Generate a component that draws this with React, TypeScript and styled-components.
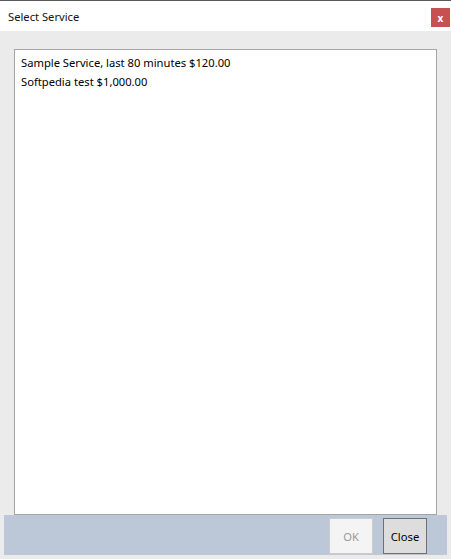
import React from "react";
import styled, { createGlobalStyle } from "styled-components";

const GlobalStyle = createGlobalStyle`
  html, body {
    margin: 0;
    padding: 0;
    background: #ebebeb;
  }
  body {
    font-family: "Noto Sans", "Open Sans", sans-serif;
  }
`;

const Window = styled.div`
  width: 451px;
  height: 559px;
  display: flex;
  flex-direction: column;
  background: #ebebeb;
  border-top: 1px solid #5a5a5a;
  box-sizing: border-box;
`;

const TitleBar = styled.div`
  height: 30px;
  background: #ffffff;
  display: flex;
  align-items: center;
  justify-content: space-between;
  padding: 0 1px 0 8px;
  flex-shrink: 0;
`;

const Title = styled.div`
  font-size: 11.2px;
  color: #111;
`;

const CloseX = styled.div`
  width: 19px;
  height: 19px;
  background: #c75050;
  color: #fff;
  font-size: 10px;
  font-weight: bold;
  display: flex;
  align-items: center;
  justify-content: center;
  margin-top: 3px;
`;

const Body = styled.div`
  flex: 1;
  display: flex;
  flex-direction: column;
  padding: 18px 14px 0 14px;
`;

const ListBox = styled.div`
  flex: 1;
  background: #fff;
  border: 1px solid #a5a5a5;
  padding: 3px 6px;
  display: flex;
  flex-direction: column;
`;

const Item = styled.div`
  font-size: 11.2px;
  color: #000;
  height: 19px;
  line-height: 19px;
`;

const Footer = styled.div`
  height: 40px;
  margin: 0 4px 4px 4px;
  background: #bcc8d8;
  display: flex;
  align-items: center;
  justify-content: flex-end;
  gap: 10px;
  padding-right: 20px;
  flex-shrink: 0;
`;

const Button = styled.button<{ $disabled?: boolean }>`
  width: 44px;
  height: 36px;
  font-family: "Noto Sans", "Open Sans", sans-serif;
  font-size: 11.2px;
  padding: 0;
  box-sizing: border-box;
  background: ${(p) => (p.$disabled ? "#f4f4f4" : "#dddddd")};
  border: 1px solid ${(p) => (p.$disabled ? "#cccccc" : "#707070")};
  color: ${(p) => (p.$disabled ? "#9a9a9a" : "#000")};
  margin-top: 2px;
`;

const services = [
  "Sample Service, last 80 minutes $120.00",
  "Softpedia test $1,000.00",
];

export default function App() {
  return (
    <>
      <GlobalStyle />
      <Window>
        <TitleBar>
          <Title>Select Service</Title>
          <CloseX>x</CloseX>
        </TitleBar>
        <Body>
          <ListBox>
            {services.map((s) => (
              <Item key={s}>{s}</Item>
            ))}
          </ListBox>
        </Body>
        <Footer>
          <Button $disabled>OK</Button>
          <Button>Close</Button>
        </Footer>
      </Window>
    </>
  );
}
